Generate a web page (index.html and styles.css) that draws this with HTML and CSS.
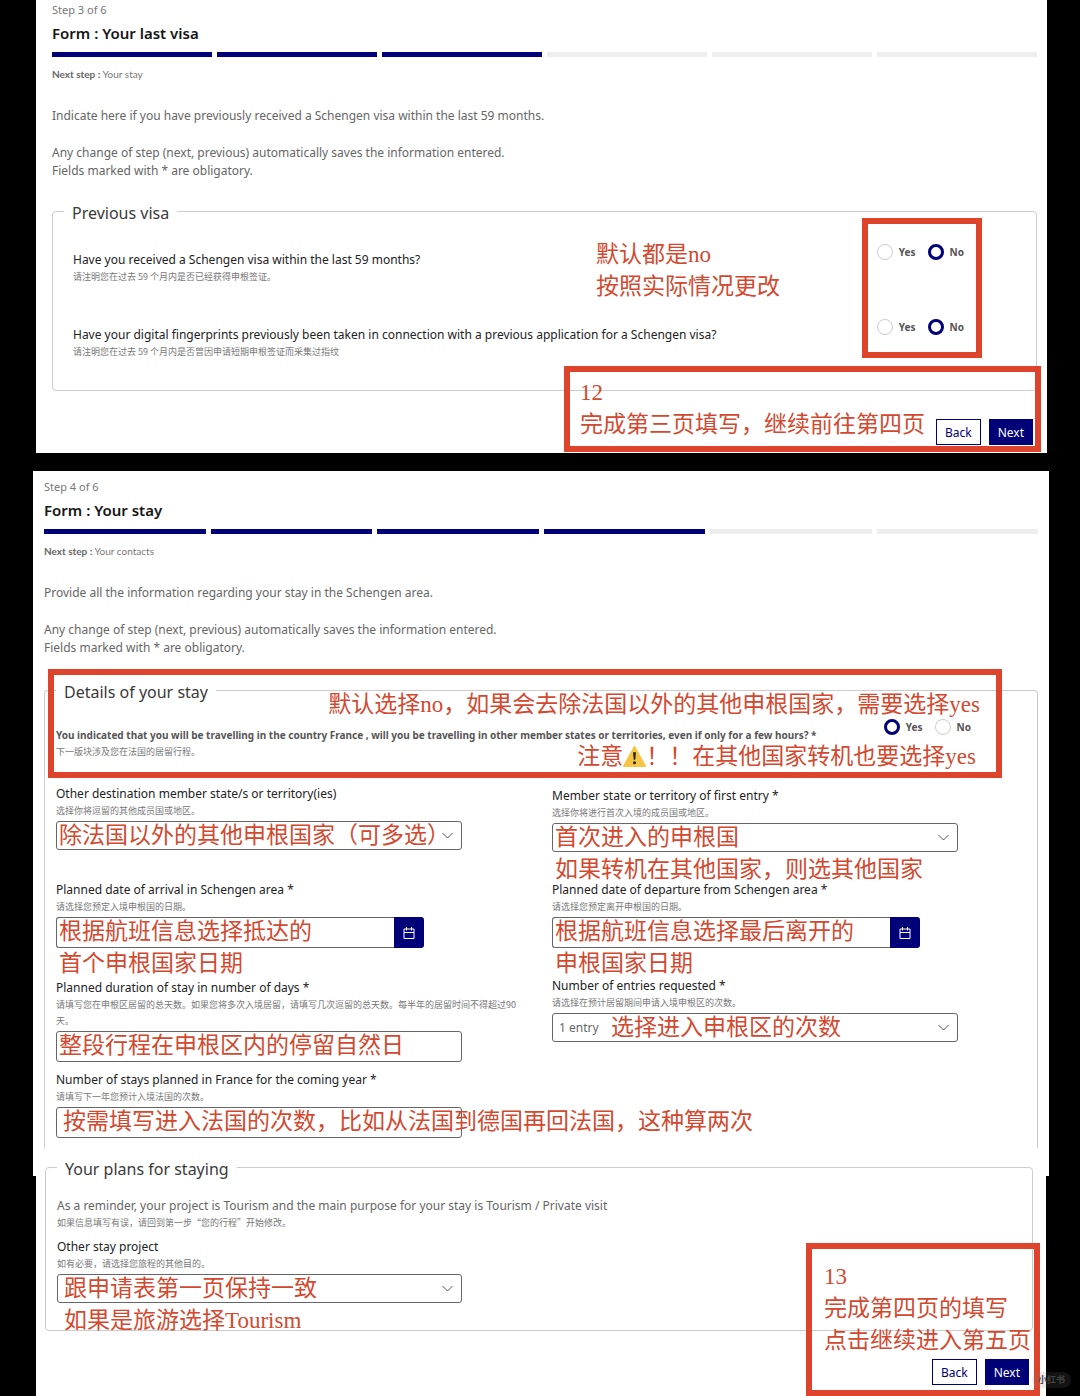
FILE: index.html
```html
<!DOCTYPE html>
<html lang="en">
<head>
<meta charset="utf-8">
<meta name="viewport" content="width=device-width, initial-scale=1">
<title>Visa application form</title>
<link rel="stylesheet" href="styles.css">
</head>
<body>
<main>
  <section class="panel panel-visa">
    <header class="stepper">
      <p class="step">Step 3 of 6</p>
      <h2>Form : Your last visa</h2>
      <div class="bars"><i class="on"></i><i class="on"></i><i class="on"></i><i></i><i></i><i></i></div>
      <p class="next-step"><b>Next step :</b> Your stay</p>
    </header>
    <div class="intro">
      <p>Indicate here if you have previously received a Schengen visa within the last 59 months.</p>
      <p>Any change of step (next, previous) automatically saves the information entered.<br>Fields marked with * are obligatory.</p>
    </div>
    <fieldset class="group group-visa">
      <legend>Previous visa</legend>
      <div class="question">
        <div>
          <p class="label" id="q1">Have you received a Schengen visa within the last 59 months?</p>
          <p class="hint" lang="zh">请注明您在过去 59 个月内是否已经获得申根签证。</p>
        </div>
        <div class="radios" role="radiogroup" aria-labelledby="q1">
          <label><input type="radio" name="visa">Yes</label>
          <label><input type="radio" name="visa" checked>No</label>
        </div>
      </div>
      <div class="question">
        <div>
          <p class="label" id="q2">Have your digital fingerprints previously been taken in connection with a previous application for a Schengen visa?</p>
          <p class="hint" lang="zh">请注明您在过去 59 个月内是否曾因申请短期申根签证而采集过指纹</p>
        </div>
        <div class="radios" role="radiogroup" aria-labelledby="q2">
          <label><input type="radio" name="prints">Yes</label>
          <label><input type="radio" name="prints" checked>No</label>
        </div>
      </div>
    </fieldset>
    <div class="actions">
      <button type="button">Back</button>
      <button type="button" class="primary">Next</button>
    </div>
    <p class="note note-default" lang="zh">默认都是no<br>按照实际情况更改</p>
    <div class="frame frame-radios"></div>
    <div class="frame frame-finish"></div>
    <p class="note note-finish" lang="zh">12<br>完成第三页填写，继续前往第四页</p>
  </section>

  <section class="panel panel-stay">
    <header class="stepper">
      <p class="step">Step 4 of 6</p>
      <h2>Form : Your stay</h2>
      <div class="bars"><i class="on"></i><i class="on"></i><i class="on"></i><i class="on"></i><i></i><i></i></div>
      <p class="next-step"><b>Next step :</b> Your contacts</p>
    </header>
    <div class="intro">
      <p>Provide all the information regarding your stay in the Schengen area.</p>
      <p>Any change of step (next, previous) automatically saves the information entered.<br>Fields marked with * are obligatory.</p>
    </div>
    <fieldset class="group group-stay">
      <legend>Details of your stay</legend>
      <div class="question">
        <div>
          <p class="label strong" id="q3">You indicated that you will be travelling in the country France , will you be travelling in other member states or territories, even if only for a few hours? *</p>
          <p class="hint" lang="zh">下一版块涉及您在法国的居留行程。</p>
        </div>
        <div class="radios" role="radiogroup" aria-labelledby="q3">
          <label><input type="radio" name="other" checked>Yes</label>
          <label><input type="radio" name="other">No</label>
        </div>
      </div>
      <div class="columns">
        <div class="column column-left">
          <div class="field">
            <label for="dest">Other destination member state/s or territory(ies)</label>
            <p class="hint" lang="zh">选择你将逗留的其他成员国或地区。</p>
            <div class="control">
              <select id="dest"><option></option></select>
              <svg class="chevron" viewBox="0 0 12 8"><path d="M1 1l5 5 5-5"/></svg>
              <p class="note" lang="zh">除法国以外的其他申根国家（可多选）</p>
            </div>
          </div>
          <div class="field">
            <label for="arrive">Planned date of arrival in Schengen area *</label>
            <p class="hint" lang="zh">请选择您预定入境申根国的日期。</p>
            <div class="control date">
              <input id="arrive" type="text">
              <button type="button" aria-label="Choose arrival date"><svg viewBox="0 0 12 14"><path d="M1 3h10v9.500h-10zM1 6.500h10M3.500 1v3.500M8.500 1v3.500"/></svg></button>
              <p class="note" lang="zh">根据航班信息选择抵达的<br>首个申根国家日期</p>
            </div>
          </div>
          <div class="pair">
            <div class="field">
              <label for="days">Planned duration of stay in number of days *</label>
              <p class="hint" lang="zh">请填写您在申根区居留的总天数。如果您将多次入境居留，请填写几次逗留的总天数。每半年的居留时间不得超过90天。</p>
              <div class="control">
                <input id="days" type="text">
                <p class="note" lang="zh">整段行程在申根区内的停留自然日</p>
              </div>
            </div>
            <div class="field">
              <label for="stays">Number of stays planned in France for the coming year *</label>
              <p class="hint" lang="zh">请填写下一年您预计入境法国的次数。</p>
              <div class="control">
                <input id="stays" type="text">
                <p class="note note-indent" lang="zh">按需填写进入法国的次数，比如从法国到德国再回法国，这种算两次</p>
              </div>
            </div>
          </div>
        </div>
        <div class="column column-right">
          <div class="field">
            <label for="first">Member state or territory of first entry *</label>
            <p class="hint" lang="zh">选择你将进行首次入境的成员国或地区。</p>
            <div class="control">
              <select id="first"><option></option></select>
              <svg class="chevron" viewBox="0 0 12 8"><path d="M1 1l5 5 5-5"/></svg>
              <p class="note" lang="zh">首次进入的申根国<br>如果转机在其他国家，则选其他国家</p>
            </div>
          </div>
          <div class="field">
            <label for="leave">Planned date of departure from Schengen area *</label>
            <p class="hint" lang="zh">请选择您预定离开申根国的日期。</p>
            <div class="control date">
              <input id="leave" type="text">
              <button type="button" aria-label="Choose departure date"><svg viewBox="0 0 12 14"><path d="M1 3h10v9.500h-10zM1 6.500h10M3.500 1v3.500M8.500 1v3.500"/></svg></button>
              <p class="note" lang="zh">根据航班信息选择最后离开的<br>申根国家日期</p>
            </div>
          </div>
          <div class="field">
            <label for="entries">Number of entries requested *</label>
            <p class="hint" lang="zh">请选择在预计居留期间申请入境申根区的次数。</p>
            <div class="control">
              <select id="entries"><option>1 entry</option></select>
              <svg class="chevron" viewBox="0 0 12 8"><path d="M1 1l5 5 5-5"/></svg>
              <p class="note note-entries" lang="zh">选择进入申根区的次数</p>
            </div>
          </div>
        </div>
      </div>
      <div class="frame frame-question"></div>
      <p class="note note-choose" lang="zh">默认选择no，如果会去除法国以外的其他申根国家，需要选择yes</p>
      <p class="note note-warn" lang="zh">注意<svg class="warn" viewBox="0 0 24 22"><path d="M12 1L23 21H1z" fill="#f6c544" stroke="#f6c544" stroke-width="2" stroke-linejoin="round"/><path d="M10.500 6.500h3l-.7 8h-1.600z" fill="#222"/><circle cx="12" cy="17.500" r="1.600" fill="#222"/></svg>！！在其他国家转机也要选择yes</p>
    </fieldset>
  </section>

  <section class="panel panel-plans">
    <fieldset class="group group-plans">
      <legend>Your plans for staying</legend>
      <p class="reminder">As a reminder, your project is Tourism and the main purpose for your stay is Tourism / Private visit</p>
      <p class="hint" lang="zh">如果信息填写有误，请回到第一步“您的行程”开始修改。</p>
      <div class="field">
        <label for="project">Other stay project</label>
        <p class="hint" lang="zh">如有必要，请选择您旅程的其他目的。</p>
        <div class="control">
          <select id="project"><option></option></select>
          <svg class="chevron" viewBox="0 0 12 8"><path d="M1 1l5 5 5-5"/></svg>
          <p class="note note-indent" lang="zh">跟申请表第一页保持一致<br>如果是旅游选择Tourism</p>
        </div>
      </div>
    </fieldset>
    <div class="actions">
      <button type="button">Back</button>
      <button type="button" class="primary">Next</button>
    </div>
    <div class="frame frame-last"></div>
    <p class="note note-last" lang="zh">13<br>完成第四页的填写<br>点击继续进入第五页</p>
    <span class="watermark" lang="zh">小红书</span>
  </section>
</main>
</body>
</html>
```
FILE: styles.css
```css
* { box-sizing: border-box; }
body {
  margin: 0;
  background: #000;
  color: #666;
  font: 12px/18px "Noto Sans", "Noto Sans CJK SC", sans-serif;
}
p, h2 { margin: 0; }

.panel { position: relative; background: #fff; }
.panel-visa { margin: 0 33px 0 36px; padding: 2px 10px 8px 16px; }
.panel-stay { margin: 18px 31px 0 33px; padding: 8px 11px 28px; }
.panel-plans { margin: -21px 34px 0 36px; padding: 0 13px 12px 9px; }

.stepper { display: flex; flex-direction: column; }
.step { font-size: 11px; line-height: 16px; color: #777; }
.stepper h2 { margin-top: 3px; font-size: 15px; line-height: 24px; font-weight: 600; color: #161616; }
.bars { display: grid; grid-template-columns: repeat(6, 1fr); gap: 5px; margin: 7px 0 9px; }
.bars i { height: 5px; background: #eee; }
.bars .on { background: #000078; }
.next-step { font: 10px/16px Lato, sans-serif; color: #777; }
.next-step b { font-weight: 700; color: #666; }
.intro { display: grid; gap: 19px; margin: 25px 0 19px; }
.panel-stay .intro { margin-bottom: 21px; }

.group { position: relative; min-width: 0; margin: 0; border: 1px solid #ccc; border-radius: 4px; }
.group legend { margin: 0; padding: 4px 8px 0; font-size: 16px; line-height: 20px; color: #3a3a3a; }
.group-visa { display: grid; gap: 41px; padding: 28px 72px 30px 20px; }
.group-visa legend { margin-left: -9px; }
.group-stay { padding: 24px 66px 10px 11px; border-bottom: 0; border-radius: 4px 4px 0 0; }
.group-plans { padding: 18px 11px 27px; }

.question { display: flex; justify-content: space-between; align-items: flex-start; }
.label, .field label { display: block; font-size: 12px; line-height: 18px; color: #222; }
.label.strong { font-size: 10px; font-weight: 700; color: #555; }
.hint { font: 9px/16px "Noto Sans CJK SC", sans-serif; color: #777; }

.radios { display: flex; gap: 12px; margin-top: -7px; }
.radios label { display: flex; align-items: center; gap: 6px; font-size: 10px; font-weight: 700; line-height: 16px; color: #555; }
.radios input { appearance: none; width: 16px; height: 16px; margin: 0; border: 1px solid #ccc; border-radius: 50%; background: #fff; }
.radios input:checked { border: 3px solid #000078; }

.columns { display: grid; grid-template-columns: 1fr 1fr; gap: 24px; margin: 25px -53px 0 0; }
.column { display: flex; flex-direction: column; }
.column-left { gap: 31px; }
.column-right { gap: 29px; padding-top: 2px; }
.pair { display: grid; gap: 9px; }

.control { position: relative; width: 86%; margin-top: 2px; }
.control input, .control select {
  appearance: none; display: block; width: 100%; margin: 0; padding: 0 6px;
  border: 1px solid #666; border-radius: 3px; background: #fff; color: #666; font: inherit;
}
.control select { height: 29px; }
.control input { height: 31px; }
.control.date { display: flex; width: 78%; }
.control.date input { flex: 1; min-width: 0; border-right: 0; border-radius: 3px 0 0 3px; }
.control.date button { display: grid; place-items: center; width: 30px; padding: 0; border: 0; border-radius: 0 3px 3px 0; background: #000078; }
.control.date svg { width: 12px; height: 14px; fill: none; stroke: #fff; }
.chevron { position: absolute; right: 8px; top: 11px; width: 13px; height: 8px; fill: none; stroke: #555; }
.group-plans .field { margin-top: 7px; }
.group-plans .control { width: 42%; }

.actions { display: flex; justify-content: flex-end; gap: 8px; margin-top: 28px; padding-right: 4px; }
.actions button {
  min-width: 44px; height: 26px; padding: 2px 8px 0; border: 1px solid #000078;
  background: #fff; color: #000078; font: inherit;
}
.actions .primary { background: #000078; color: #fff; }

/* Hand-added guidance drawn over the forms */
.note {
  position: absolute; left: 3px; top: -1px; white-space: nowrap; pointer-events: none;
  color: #d2492f; font: 23px/32px "Liberation Serif", "Noto Sans CJK SC", serif;
}
.note-indent { left: 7px; }
.frame { position: absolute; border: 6px solid #de432b; pointer-events: none; }
.note-default { left: auto; right: 267px; top: 239px; }
.frame-radios { right: 65px; top: 218px; width: 120px; height: 140px; }
.frame-finish { right: 6px; bottom: 1px; width: 477px; height: 86px; }
.note-finish { left: auto; right: 122px; top: 377px; }
.frame-question { left: 3px; right: 35px; top: -33px; height: 109px; }
.note-choose { left: auto; right: 57px; top: -13px; }
.note-warn { left: auto; right: 61px; top: 39px; }
.note-entries { left: 59px; }
.warn { width: 23px; height: 21px; vertical-align: -3px; }
.frame-last { right: 6px; bottom: 1px; width: 234px; height: 153px; }
.note-last { left: auto; right: 15px; bottom: 40px; top: auto; }
.watermark {
  position: absolute; right: -25px; bottom: 9px; padding: 0 6px; border-radius: 8px;
  background: rgba(128, 128, 128, .15); color: #444; font: 700 9px/16px "Noto Sans CJK SC", sans-serif;
}
```
